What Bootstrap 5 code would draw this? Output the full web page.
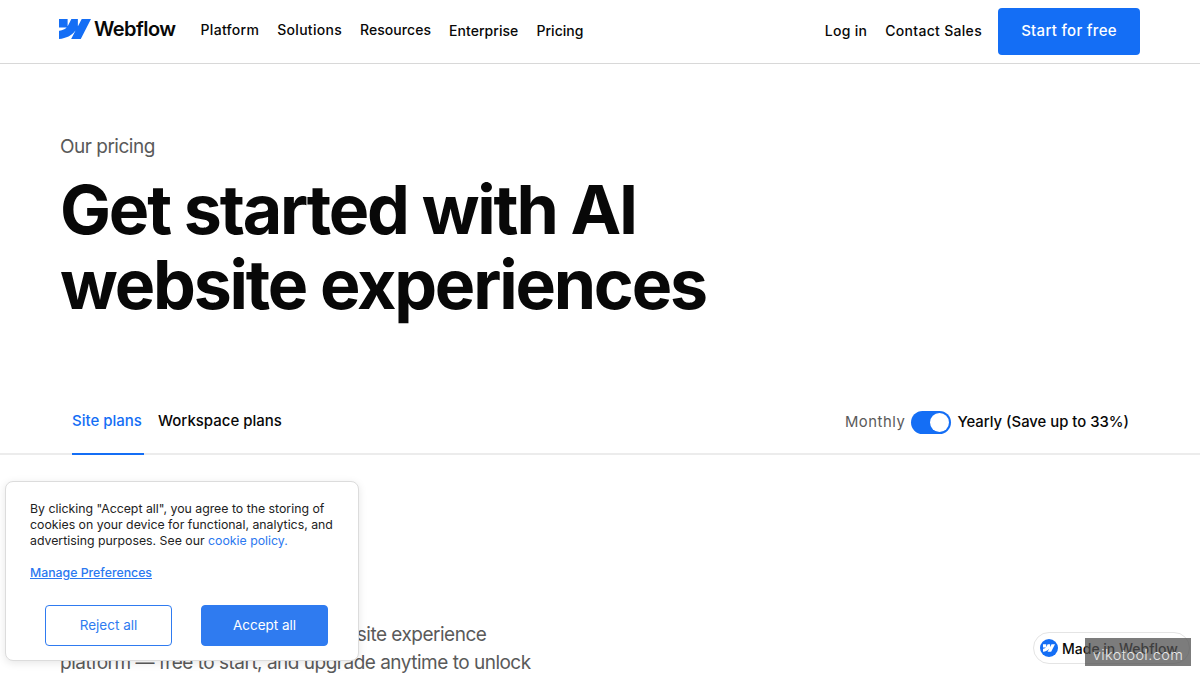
<!DOCTYPE html>
<html lang="en">
<head>
    <meta charset="UTF-8">
    <meta name="viewport" content="width=device-width, initial-scale=1.0">
    <title>Webflow Pricing</title>
    <link href="https://cdn.jsdelivr.net/npm/bootstrap@5.3.3/dist/css/bootstrap.min.css" rel="stylesheet">
    <style>
        html, body { height: 100%; overflow: hidden; }
        body {
            font-family: Inter, "Liberation Sans", sans-serif;
            color: #080808;
            background: #fff;
            height: 675px;
        }
        .top-bar {
            height: 64px;
            padding: 0 60px 0 59px;
            border-bottom: 1px solid #d8d8d8;
        }
        .brand-link { color: #080808; text-decoration: none; font-size: 20px; font-weight: 600; letter-spacing: -0.55px; gap: 3px; margin-right: 24px; margin-top: -5px; }
        .brand-link svg { width: 32px; height: 20px; }
        .top-link { color: #080808; text-decoration: none; font-size: 14px; font-weight: 500; letter-spacing: 0.3px; margin-top: -2px; }
        .top-link.menu-item { margin-top: -4px; }
        .top-link.tight-link { letter-spacing: 0.05px; }
        .main-links { gap: 18px; margin-left: 1px; }
        .side-links { gap: 18px; }
        .cta-btn {
            background: #146ef5;
            color: #fff;
            font-size: 15px;
            font-weight: 500;
            letter-spacing: 0.3px;
            width: 142px;
            height: 47px;
            border-radius: 4px;
            border: 0;
            margin-left: -2px;
        }
        .hero-block { padding: 71px 60px 0; }
        .hero-eyebrow { font-size: 19px; color: #5a5a5a; line-height: 24px; margin: 0 0 13px; letter-spacing: -0.5px; }
        .hero-title { font-size: 68px; line-height: 75px; font-weight: 700; letter-spacing: -2.2px; margin: 0; color: #080808; }
        .tab-row { height: 71px; margin-top: 62px; padding: 0 72px; border-bottom: 2px solid #ececec; }
        .plan-tab { font-size: 15px; font-weight: 500; color: #080808; height: 71px; line-height: 74px; text-decoration: none; margin-bottom: -2px; }
        .plan-tab.is-active { color: #146ef5; border-bottom: 2px solid #146ef5; width: 72px; margin-right: 14px; }
        .bill-toggle { font-size: 14.85px; font-weight: 500; gap: 6px; margin-right: -1px; margin-top: 8px; }
        .bill-off { color: #5a5a5a; font-weight: 400; letter-spacing: 0.55px; }
        .switch-pill { width: 40px; height: 23px; border-radius: 12px; background: #146ef5; padding: 2px; display: flex; justify-content: flex-end; }
        .switch-knob { width: 19px; height: 19px; background: #fff; border-radius: 50%; }
        .intro-text { position: absolute; left: 60px; top: 621px; font-size: 19px; line-height: 28px; color: #5a5a5a; white-space: nowrap; letter-spacing: -0.5px; }
        .cookie-box {
            position: absolute;
            left: 5px;
            top: 481px;
            width: 354px;
            height: 180px;
            background: #fff;
            border: 1px solid #dcdcdc;
            border-radius: 8px;
            box-shadow: 0 2px 8px rgba(0, 0, 0, .1);
            padding: 19px 20px 0 24px;
            font-size: 12.3px;
            line-height: 16px;
            color: #222;
        }
        .cookie-box a { color: #2b78f0; text-decoration: none; }
        .cookie-box a.manage-link { text-decoration: underline; font-weight: 500; }
        .cookie-box p { margin: 0 0 16px; }
        .cookie-actions { gap: 29px; padding-left: 15px; margin-top: 24px; }
        .cookie-btn { width: 127px; height: 41px; font-size: 13.5px; border-radius: 4px; border: 1px solid #2f7bf0; padding: 0; }
        .cookie-reject { background: #fff; color: #2f7bf0; }
        .cookie-accept { background: #2f7bf0; color: #fff; }
        .made-badge {
            position: absolute;
            left: 1033px;
            top: 632px;
            width: 157px;
            height: 32px;
            background: #fff;
            border: 1px solid #e4e4e4;
            border-radius: 16px;
            padding-left: 6px;
            gap: 4px;
            font-size: 14px;
            font-weight: 500;
            color: #080808;
            white-space: nowrap;
        }
        .made-dot { width: 18px; height: 18px; border-radius: 50%; background: #146ef5; }
        .made-dot svg { width: 12px; height: 8px; }
        .stamp-box {
            position: absolute;
            left: 1085px;
            top: 638px;
            width: 106px;
            height: 28px;
            background: rgba(80, 80, 80, .75);
            color: #e8e8e8;
            font-size: 14.5px;
            font-weight: 300;
            line-height: 33px;
            text-align: center;
            letter-spacing: 0.4px;
        }
    </style>
</head>
<body>
    <nav class="top-bar d-flex align-items-center">
        <a href="#" class="brand-link d-flex align-items-center">
            <svg viewBox="0 0 108 67.5"><path fill="#146ef5" d="M108 0 73.500 67.500H41L55.500 39.500h-.6C42.900 55 25 65.300 0 67.500V39.900s16.300-1 25.900-11H0V0h29.100v23.900l.7 0L41.700 0h22v23.800l.7 0L76.700 0z"/></svg>
            <span>Webflow</span>
        </a>
        <div class="main-links d-flex align-items-center">
            <a href="#" class="top-link menu-item">Platform</a>
            <a href="#" class="top-link menu-item">Solutions</a>
            <a href="#" class="top-link menu-item tight-link">Resources</a>
            <a href="#" class="top-link tight-link">Enterprise</a>
            <a href="#" class="top-link tight-link">Pricing</a>
        </div>
        <div class="side-links d-flex align-items-center ms-auto">
            <a href="#" class="top-link">Log in</a>
            <a href="#" class="top-link">Contact Sales</a>
            <button class="btn cta-btn">Start for free</button>
        </div>
    </nav>

    <section class="hero-block">
        <p class="hero-eyebrow">Our pricing</p>
        <h1 class="hero-title">Get started with AI<br>website experiences</h1>
    </section>

    <div class="tab-row d-flex align-items-center">
        <a href="#" class="plan-tab is-active">Site plans</a>
        <a href="#" class="plan-tab">Workspace plans</a>
        <div class="bill-toggle d-flex align-items-center ms-auto">
            <span class="bill-off">Monthly</span>
            <span class="switch-pill"><span class="switch-knob"></span></span>
            <span>Yearly (Save up to 33%)</span>
        </div>
    </div>

    <p class="intro-text">Webflow is the leading secure website experience<br>platform — free to start, and upgrade anytime to unlock</p>

    <div class="cookie-box">
        <p>By clicking "Accept all", you agree to the storing of cookies on your device for functional, analytics, and advertising purposes. See our <a href="#">cookie policy.</a></p>
        <a href="#" class="manage-link">Manage Preferences</a>
        <div class="cookie-actions d-flex">
            <button class="btn cookie-btn cookie-reject">Reject all</button>
            <button class="btn cookie-btn cookie-accept">Accept all</button>
        </div>
    </div>

    <div class="made-badge d-flex align-items-center">
        <span class="made-dot d-flex align-items-center justify-content-center">
            <svg viewBox="0 0 108 67.5"><path fill="#fff" d="M108 0 73.500 67.500H41L55.500 39.500h-.6C42.900 55 25 65.300 0 67.500V39.900s16.300-1 25.900-11H0V0h29.100v23.900l.7 0L41.700 0h22v23.800l.7 0L76.700 0z"/></svg>
        </span>
        <span>Made in Webflow</span>
    </div>
    <div class="stamp-box">vikotool.com</div>

    <script src="https://cdn.jsdelivr.net/npm/bootstrap@5.3.3/dist/js/bootstrap.bundle.min.js"></script>
</body>
</html>
